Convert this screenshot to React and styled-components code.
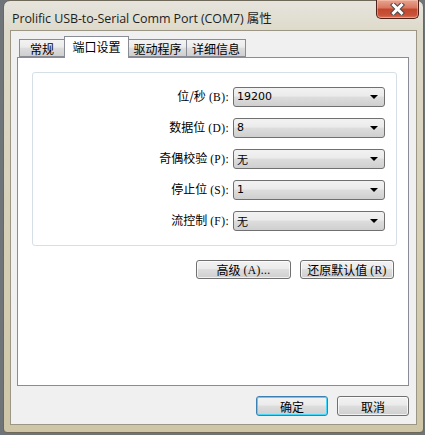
import React from "react";
import styled, { createGlobalStyle } from "styled-components";

const GlobalStyle = createGlobalStyle`
  html, body {
    margin: 0;
    padding: 0;
    background: #6f7478;
  }
  body {
    font-family: "Noto Sans CJK SC", "Liberation Sans", sans-serif;
    font-size: 12px;
  }
`;

const Window = styled.div`
  width: 421px;
  height: 433px;
  margin-left: 3px;
  box-sizing: border-box;
  border: 1px solid #6d6857;
  border-radius: 7px 7px 4px 4px;
  background: linear-gradient(#e6e4dd, #dedacb 30px, #d6ceb4 60%, #cfc6a8);
  display: flex;
  flex-direction: column;
  padding: 0 6px 7px 6px;
`;

const TitleBar = styled.div`
  height: 29px;
  display: flex;
  align-items: flex-start;
  justify-content: space-between;
`;

const Title = styled.div`
  font-family: "Open Sans", "Noto Sans CJK SC", sans-serif;
  font-size: 12.5px;
  color: #1e1e1e;
  padding: 7px 0 0 2px;
  letter-spacing: -0.1px;
`;

const CloseButton = styled.div`
  width: 43px;
  height: 19px;
  margin-top: -1px;
  margin-right: -2px;
  box-sizing: border-box;
  border: 1px solid #4e2219;
  border-top: none;
  border-radius: 0 0 5px 5px;
  background: linear-gradient(#e8a590, #d8765f 45%, #c2462c 50%, #c9533a 85%, #dc7a5e);
  box-shadow: inset 0 0 0 1px rgba(255, 210, 190, 0.45);
  display: flex;
  align-items: center;
  justify-content: center;
`;

const Client = styled.div`
  flex: 1;
  background: #f0f0f0;
  border: 1px solid #9c9684;
  display: flex;
  flex-direction: column;
  padding: 5px 7px 8px 6px;
`;

const TabStrip = styled.div`
  display: flex;
  align-items: flex-end;
  padding-left: 2px;
  height: 21px;
  position: relative;
  z-index: 1;
`;

const Tab = styled.div`
  box-sizing: border-box;
  width: ${(p) => p.$w}px;
  height: ${(p) => (p.$active ? 22 : 18)}px;
  margin-left: -1px;
  margin-bottom: ${(p) => (p.$active ? -1 : 0)}px;
  border: 1px solid #898c95;
  border-bottom: ${(p) => (p.$active ? "none" : "1px solid #898c95")};
  background: ${(p) =>
    p.$active ? "#ffffff" : "linear-gradient(#f3f3f3, #ebebeb 45%, #dddddd 50%, #cfcfcf)"};
  font-size: 12px;
  color: #000;
  text-align: center;
  line-height: ${(p) => (p.$active ? 19 : 17)}px;
  &:first-child {
    margin-left: 0;
  }
`;

const Panel = styled.div`
  flex: 1;
  background: #fff;
  border: 1px solid #898c95;
  padding: 14px 11px 0 14px;
  display: flex;
  flex-direction: column;
`;

const Group = styled.div`
  border: 1px solid #d5dfe5;
  border-radius: 3px;
  padding: 13px 11px 14px 0;
  display: grid;
  grid-template-columns: 1fr 152px;
  column-gap: 4px;
  row-gap: 10px;
  align-items: center;
`;

const Label = styled.div`
  text-align: right;
  font-size: 12px;
  color: #000;
  line-height: 20px;
`;

const Key = styled.span`
  font-family: "Liberation Serif", serif;
  font-size: 11.5px;
  margin-left: 3px;
  letter-spacing: 0.4px;
`;

const Select = styled.div`
  box-sizing: border-box;
  height: 20px;
  border: 1px solid #707070;
  border-radius: 3px;
  background: linear-gradient(#f2f2f2, #ebebeb 45%, #dddddd 50%, #cfcfcf);
  display: flex;
  align-items: center;
  justify-content: space-between;
  padding: 0 6px 0 3px;
  font-family: "DejaVu Sans", "Noto Sans CJK SC", sans-serif;
  font-size: 11px;
  color: #000;
`;

const Arrow = styled.span`
  width: 0;
  height: 0;
  border-left: 4px solid transparent;
  border-right: 4px solid transparent;
  border-top: 4px solid #000;
`;

const ButtonRow = styled.div`
  display: flex;
  justify-content: flex-end;
  gap: 9px;
  margin-top: 14px;
  padding-right: 3px;
`;

const Button = styled.div`
  box-sizing: border-box;
  width: ${(p) => p.$w}px;
  height: ${(p) => p.$h || 19}px;
  border: 1px solid ${(p) => (p.$default ? "#3c7fb1" : "#707070")};
  border-radius: 3px;
  background: linear-gradient(#f2f2f2, #ebebeb 45%, #dddddd 50%, #cfcfcf);
  box-shadow: ${(p) =>
    p.$default ? "inset 0 0 0 1px #48d8fb" : "inset 0 0 0 1px rgba(255,255,255,0.7)"};
  display: flex;
  align-items: center;
  justify-content: center;
  font-size: 12px;
  color: #000;
`;

const Footer = styled.div`
  display: flex;
  justify-content: flex-end;
  gap: 9px;
  margin-top: 10px;
`;

const rows = [
  { label: "位/秒", key: "(B):", value: "19200" },
  { label: "数据位", key: "(D):", value: "8" },
  { label: "奇偶校验", key: "(P):", value: "无" },
  { label: "停止位", key: "(S):", value: "1" },
  { label: "流控制", key: "(F):", value: "无" },
];

const tabs = [
  { name: "常规", w: 46 },
  { name: "端口设置", w: 65, active: true },
  { name: "驱动程序", w: 59 },
  { name: "详细信息", w: 60 },
];

export default function App() {
  return (
    <>
      <GlobalStyle />
      <Window>
        <TitleBar>
          <Title>Prolific USB-to-Serial Comm Port (COM7) 属性</Title>
          <CloseButton>
            <svg width="15" height="12" viewBox="0 0 15 12">
              <path d="M3.5 2 L11.5 10 M11.5 2 L3.5 10" stroke="#4a4a4a" strokeWidth="5" strokeLinecap="square" />
              <path d="M3.5 2 L11.5 10 M11.5 2 L3.5 10" stroke="#ffffff" strokeWidth="3" strokeLinecap="square" />
            </svg>
          </CloseButton>
        </TitleBar>
        <Client>
          <TabStrip>
            {tabs.map((t) => (
              <Tab key={t.name} $w={t.w} $active={t.active}>
                {t.name}
              </Tab>
            ))}
          </TabStrip>
          <Panel>
            <Group>
              {rows.map((r) => (
                <React.Fragment key={r.label}>
                  <Label>
                    {r.label}
                    <Key>{r.key}</Key>
                  </Label>
                  <Select>
                    <span>{r.value}</span>
                    <Arrow />
                  </Select>
                </React.Fragment>
              ))}
            </Group>
            <ButtonRow>
              <Button $w={95}>
                高级<Key>(A)...</Key>
              </Button>
              <Button $w={94}>
                还原默认值<Key>(R)</Key>
              </Button>
            </ButtonRow>
          </Panel>
          <Footer>
            <Button $w={72} $h={20} $default>
              确定
            </Button>
            <Button $w={72} $h={20}>
              取消
            </Button>
          </Footer>
        </Client>
      </Window>
    </>
  );
}
